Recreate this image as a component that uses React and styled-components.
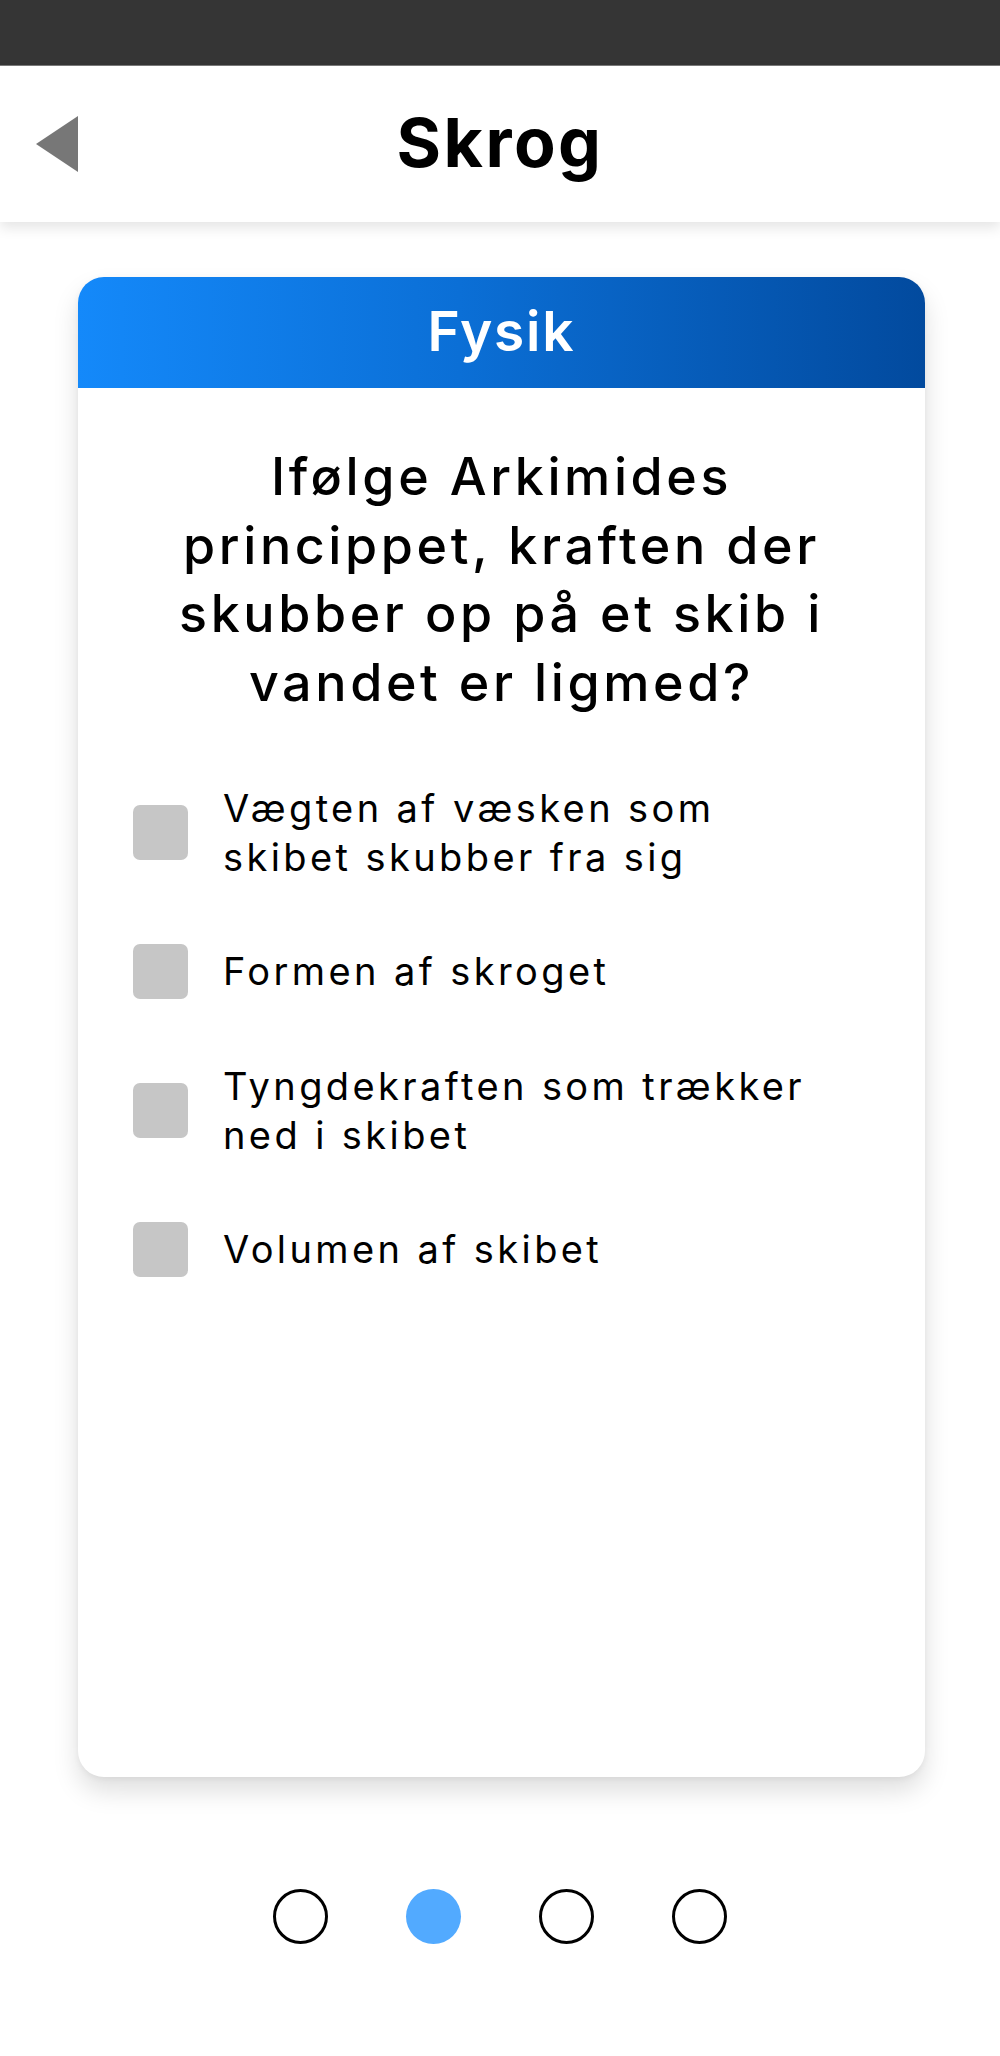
import React from "react";
import styled, { createGlobalStyle } from "styled-components";

const GlobalStyle = createGlobalStyle`
  html, body {
    margin: 0;
    padding: 0;
    background: #ffffff;
  }
  body {
    font-family: Inter, "Noto Sans", Roboto, sans-serif;
    color: #000;
  }
  * { box-sizing: border-box; }
`;

const Screen = styled.div`
  width: 1000px;
  min-height: 2056px;
  display: flex;
  flex-direction: column;
  background: #fff;
`;

const StatusBar = styled.div`
  height: 66px;
  background: #353535;
  border-bottom: 1px solid #7a7a7a;
`;

const TopBar = styled.header`
  height: 156px;
  display: grid;
  grid-template-columns: 1fr auto 1fr;
  align-items: center;
  background: #fff;
  box-shadow: 0 6px 12px rgba(0, 0, 0, 0.1);
  position: relative;
  z-index: 1;
`;

const BackButton = styled.button`
  justify-self: start;
  margin-left: 36px;
  padding: 0;
  border: 0;
  background: none;
  display: flex;
  cursor: pointer;
`;

const Title = styled.h1`
  margin: 0;
  font-size: 68px;
  font-weight: 700;
  letter-spacing: 2.5px;
  line-height: 1;
  padding-bottom: 4px;
`;

const Main = styled.main`
  padding: 55px 0 0 78px;
  display: flex;
  flex-direction: column;
`;

const Card = styled.section`
  width: 847px;
  height: 1500px;
  border-radius: 26px;
  overflow: hidden;
  background: #fff;
  box-shadow: 0 14px 26px rgba(0, 0, 0, 0.13), 0 2px 6px rgba(0, 0, 0, 0.05);
  display: flex;
  flex-direction: column;
`;

const CardHeader = styled.div`
  height: 111px;
  background: linear-gradient(90deg, #1489fa 0%, #0b6fd6 45%, #024a9e 100%);
  display: flex;
  align-items: center;
  justify-content: center;
  color: #fff;
  font-size: 55px;
  font-weight: 600;
  letter-spacing: 1.8px;
  padding-bottom: 4px;
`;

const Question = styled.p`
  margin: 55px auto 0;
  width: 690px;
  text-align: center;
  font-size: 52px;
  font-weight: 500;
  line-height: 68.6px;
  letter-spacing: 3.6px;
`;

const OptionList = styled.ul`
  list-style: none;
  margin: 46px 0 0;
  padding: 0 0 0 55px;
  display: flex;
  flex-direction: column;
`;

const OptionRow = styled.li`
  height: 139px;
  display: flex;
  align-items: center;
  gap: 35px;
`;

const Checkbox = styled.span`
  flex: none;
  width: 55px;
  height: 55px;
  border-radius: 7px;
  background: #c6c6c6;
`;

const OptionText = styled.span`
  width: 598px;
  font-size: 38px;
  font-weight: 400;
  line-height: 49px;
  letter-spacing: 3.4px;
`;

const Pager = styled.nav`
  margin-top: 112px;
  display: flex;
  justify-content: center;
  gap: 78px;
`;

const Dot = styled.span`
  width: 55px;
  height: 55px;
  border-radius: 50%;
  border: ${(p) => (p.$active ? "none" : "3px solid #000")};
  background: ${(p) => (p.$active ? "#52aaff" : "transparent")};
`;

const options = [
  "Vægten af væsken som skibet skubber fra sig",
  "Formen af skroget",
  "Tyngdekraften som trækker ned i skibet",
  "Volumen af skibet",
];

export default function App() {
  return (
    <Screen>
      <GlobalStyle />
      <StatusBar />
      <TopBar>
        <BackButton aria-label="Tilbage">
          <svg width="42" height="56" viewBox="0 0 42 56">
            <polygon points="0,28 42,0 42,56" fill="#777777" />
          </svg>
        </BackButton>
        <Title>Skrog</Title>
        <span />
      </TopBar>
      <Main>
        <Card>
          <CardHeader>Fysik</CardHeader>
          <Question>
            Ifølge Arkimides princippet, kraften der skubber op på et skib i vandet er ligmed?
          </Question>
          <OptionList>
            {options.map((o) => (
              <OptionRow key={o}>
                <Checkbox />
                <OptionText>{o}</OptionText>
              </OptionRow>
            ))}
          </OptionList>
        </Card>
      </Main>
      <Pager>
        {[0, 1, 2, 3].map((i) => (
          <Dot key={i} $active={i === 1} />
        ))}
      </Pager>
    </Screen>
  );
}
